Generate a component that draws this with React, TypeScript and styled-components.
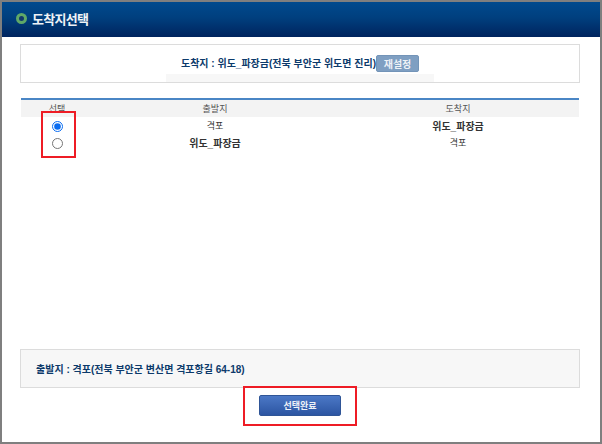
import React from 'react';
import styled, { createGlobalStyle } from 'styled-components';

const GlobalStyle = createGlobalStyle`
  html, body {
    margin: 0;
    padding: 0;
    background: #fff;
  }
  * {
    box-sizing: border-box;
  }
`;

const Window = styled.div`
  position: relative;
  width: 602px;
  height: 444px;
  display: flex;
  flex-direction: column;
  border: 2px solid #7f7f7f;
  background: #fff;
  font-family: "Liberation Sans", "Noto Sans CJK KR", sans-serif;
  overflow: hidden;
`;

const Header = styled.header`
  height: 35px;
  flex: none;
  display: flex;
  align-items: center;
  gap: 5px;
  padding: 0 0 3px 14px;
  background: linear-gradient(to bottom, #004a8e 0%, #003f7e 45%, #00245e 100%);
`;

const Bullet = styled.span`
  width: 11px;
  height: 11px;
  border-radius: 50%;
  border: 3px solid #5fa868;
  background: #12396b;
`;

const Title = styled.h1`
  margin: 0;
  font-size: 13px;
  font-weight: 700;
  letter-spacing: -0.7px;
  color: #eef2f6;
`;

const Content = styled.main`
  flex: 1;
  display: flex;
  flex-direction: column;
  padding: 7px 20px 0 18px;
`;

const InfoBox = styled.section`
  position: relative;
  height: 39px;
  flex: none;
  display: flex;
  justify-content: center;
  align-items: flex-start;
  padding: 10px 0 0 0;
  border: 1px solid #dcdcdc;
`;

const InfoStrip = styled.div`
  position: absolute;
  left: 145px;
  right: 145px;
  bottom: 0;
  height: 8px;
  background: #f7f7f7;
`;

const InfoText = styled.span`
  position: relative;
  font-size: 10px;
  font-weight: 700;
  line-height: 17px;
  color: #0c3a6b;
  white-space: nowrap;
`;

const ResetButton = styled.button`
  position: relative;
  width: 43px;
  height: 17px;
  padding: 0;
  border: 1px solid #7394b8;
  border-radius: 2px;
  background: #7f9fc2;
  color: #eef2f7;
  font-family: inherit;
  font-size: 10px;
  font-weight: 700;
`;

const TableWrap = styled.div`
  position: relative;
  flex: 1;
  margin: 15px 1px 0;
`;

const Table = styled.table`
  width: 558px;
  table-layout: fixed;
  border-collapse: collapse;
  border-top: 2px solid #4a86c5;
`;

const HeadCell = styled.th<{ $width: number }>`
  width: ${props => props.$width}px;
  height: 18px;
  padding: 0;
  background: #f3f3f3;
  font-size: 9px;
  font-weight: 400;
  color: #555;
`;

const Cell = styled.td<{ $strong?: boolean }>`
  height: 17px;
  padding: 0;
  text-align: center;
  font-size: ${props => (props.$strong ? 10 : 9)}px;
  font-weight: ${props => (props.$strong ? 700 : 400)};
  color: #333;
`;

const Radio = styled.input`
  display: block;
  width: 11px;
  height: 11px;
  margin: 2px auto 0;
  accent-color: #0a6cf0;
`;

const RadioHighlight = styled.div`
  position: absolute;
  left: 20px;
  top: 13px;
  width: 35px;
  height: 47px;
  border: 2px solid #ee1c25;
  pointer-events: none;
`;

const RouteBox = styled.section`
  height: 39px;
  flex: none;
  display: flex;
  align-items: center;
  padding-left: 15px;
  border: 1px solid #dcdcdc;
  background: #f7f7f7;
  font-size: 10px;
  font-weight: 700;
  color: #0c3a6b;
`;

const Footer = styled.footer`
  position: relative;
  height: 54px;
  flex: none;
  display: flex;
  justify-content: center;
  padding-top: 7px;
`;

const SubmitButton = styled.button`
  width: 82px;
  height: 21px;
  padding: 0;
  border: 1px solid #2f5597;
  border-radius: 2px;
  background: linear-gradient(to bottom, #4b78c6 0%, #2c55a2 100%);
  color: #eef2f8;
  font-family: inherit;
  font-size: 9px;
  font-weight: 700;
`;

const SubmitHighlight = styled.div`
  position: absolute;
  left: 223px;
  top: -2px;
  width: 114px;
  height: 40px;
  border: 2px solid #ee1c25;
  pointer-events: none;
`;

const routes = [
  { id: 1, from: '격포', to: '위도_파장금', toStrong: true, checked: true },
  { id: 2, from: '위도_파장금', to: '격포', fromStrong: true, checked: false },
];

const App: React.FC = () => {
  return (
    <>
      <GlobalStyle />
      <Window>
        <Header>
          <Bullet />
          <Title>도착지선택</Title>
        </Header>
        <Content>
          <InfoBox>
            <InfoStrip />
            <InfoText>도착지 : 위도_파장금(전북 부안군 위도면 진리)</InfoText>
            <ResetButton type="button">재설정</ResetButton>
          </InfoBox>
          <TableWrap>
            <Table>
              <thead>
                <tr>
                  <HeadCell $width={72}>선택</HeadCell>
                  <HeadCell $width={244}>출발지</HeadCell>
                  <HeadCell $width={242}>도착지</HeadCell>
                </tr>
              </thead>
              <tbody>
                {routes.map(route => (
                  <tr key={route.id}>
                    <Cell>
                      <Radio type="radio" name="route" defaultChecked={route.checked} />
                    </Cell>
                    <Cell $strong={route.fromStrong}>{route.from}</Cell>
                    <Cell $strong={route.toStrong}>{route.to}</Cell>
                  </tr>
                ))}
              </tbody>
            </Table>
            <RadioHighlight />
          </TableWrap>
          <RouteBox>출발지 : 격포(전북 부안군 변산면 격포항길 64-18)</RouteBox>
          <Footer>
            <SubmitButton type="button">선택완료</SubmitButton>
            <SubmitHighlight />
          </Footer>
        </Content>
      </Window>
    </>
  );
};

export default App;
